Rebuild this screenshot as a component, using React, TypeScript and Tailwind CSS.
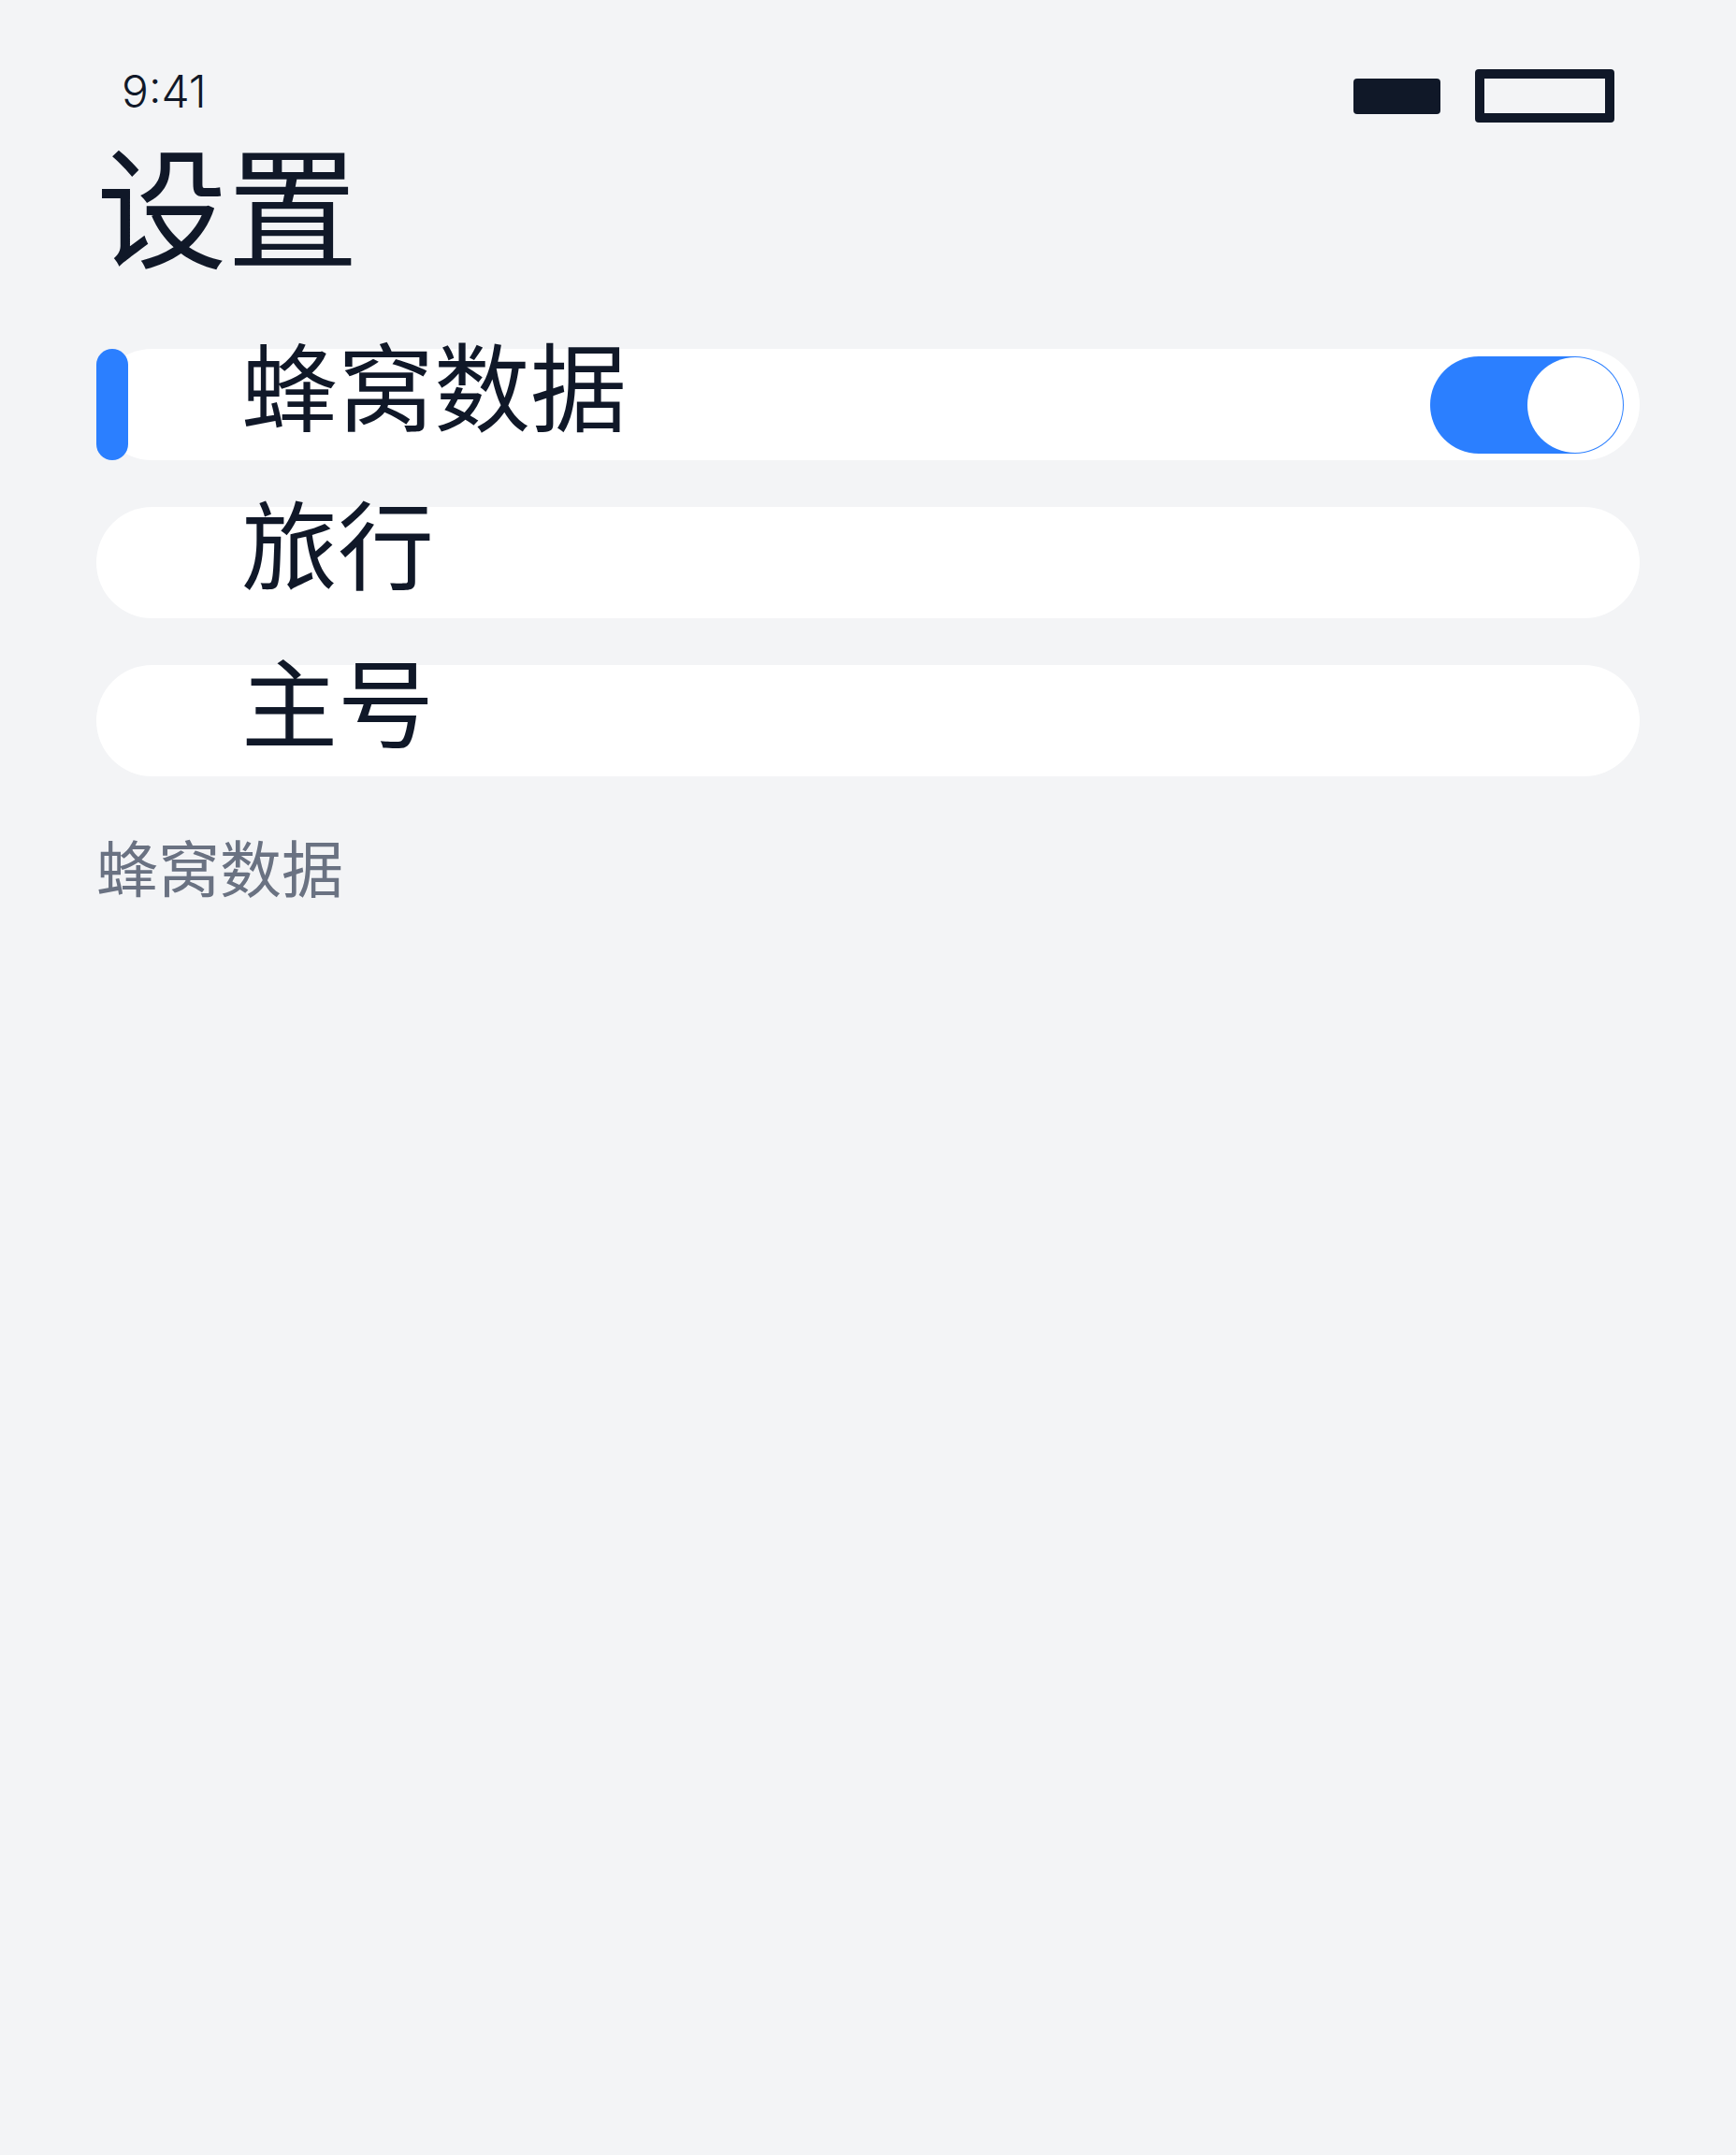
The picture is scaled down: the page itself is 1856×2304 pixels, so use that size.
const rows = [
  { label: '蜂窝数据', active: true, toggle: true },
  { label: '旅行', active: false, toggle: false },
  { label: '主号', active: false, toggle: false },
];

const StatusBar = () => (
  <div className="flex items-start justify-between px-[130px] pt-[74px]">
    <span className="font-['Inter',sans-serif] text-[48px] font-light leading-none text-gray-900">9:41</span>
    <div className="flex h-[57px] items-center gap-[37px]">
      <div className="h-[38px] w-[93px] rounded-[4px] bg-gray-900" />
      <div className="h-[57px] w-[149px] rounded-[4px] border-[10px] border-gray-900" />
    </div>
  </div>
);

const Toggle = () => (
  <div className="ml-auto flex h-[104px] w-[207px] justify-end rounded-full bg-blue-500 p-px">
    <div className="h-[102px] w-[102px] rounded-full bg-white" />
  </div>
);

const SettingRow = ({ label, active, toggle }: { label: string; active: boolean; toggle: boolean }) => (
  <div className="relative flex h-[119px] items-center rounded-full bg-white pl-[155px] pr-[17px]">
    {active && <div className="absolute left-0 top-0 h-full w-[34px] rounded-full bg-blue-500" />}
    <span className="-mt-[15px] self-start text-[103px] leading-none text-gray-900">{label}</span>
    {toggle && <Toggle />}
  </div>
);

export default function App() {
  return (
    <div className="min-h-[2304px] w-full bg-gray-100 font-['Noto_Sans_CJK_SC',sans-serif]">
      <StatusBar />
      <div className="px-[103px]">
        <h1 className="mt-[14px] text-[140px] font-normal leading-none text-gray-900">设置</h1>
        <div className="mt-[88px] flex flex-col gap-[50px]">
          {rows.map((row) => (
            <SettingRow key={row.label} {...row} />
          ))}
        </div>
        <p className="mt-[62px] text-[66px] leading-none text-gray-500">蜂窝数据</p>
      </div>
    </div>
  );
}
